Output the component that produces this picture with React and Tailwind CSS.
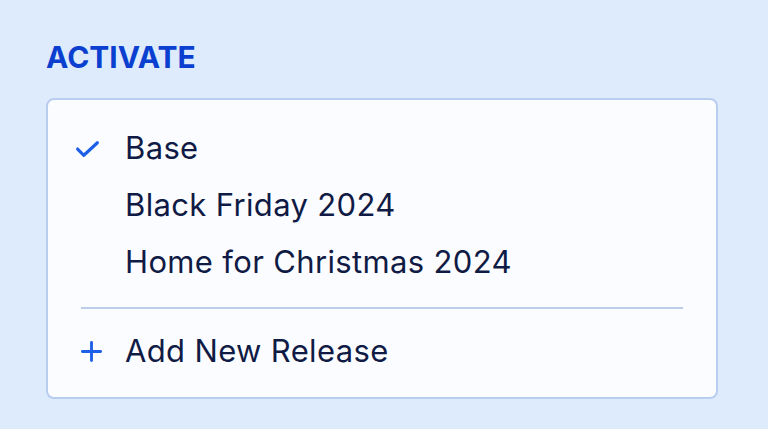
export default function App() {
  const releases = ['Base', 'Black Friday 2024', 'Home for Christmas 2024'];
  const active = 'Base';

  return (
    <div className="min-h-screen w-full bg-[#ddebfc] px-[46px] pt-[38px]" style={{ fontFamily: 'Inter, "Liberation Sans", sans-serif' }}>
      <h2 className="text-[30px] leading-[38px] font-bold text-[#0b3fcf]">ACTIVATE</h2>
      <div className="mt-[22px] w-[672px] rounded-[8px] border-2 border-[#b9cdef] bg-[#fbfcff] pt-[20px] pb-[17px]">
        <ul>
          {releases.map((r) => (
            <li key={r} className="flex h-[57px] items-center">
              <span className="flex w-[77px] justify-end pr-[25px]">
                {r === active && (
                  <svg width="25" height="25" viewBox="0 0 24 24" fill="none" stroke="#1d5fe8" strokeWidth="3" strokeLinecap="round" strokeLinejoin="round">
                    <path d="M2.5 12.5l6 6L21.5 6.5" />
                  </svg>
                )}
              </span>
              <span className="text-[31px] tracking-[0.35px] text-[#101b45]">{r}</span>
            </li>
          ))}
        </ul>
        <div className="mx-[33px] mt-[16px] mb-[14px] h-[2px] bg-[#bccdea]" />
        <button className="flex h-[57px] w-full items-center">
          <span className="flex w-[77px] justify-end pr-[22px]">
            <svg width="23" height="23" viewBox="0 0 24 24" fill="none" stroke="#1d5fe8" strokeWidth="3" strokeLinecap="round">
              <path d="M12 2.5v19M2.5 12h19" />
            </svg>
          </span>
          <span className="text-[31px] tracking-[0.35px] text-[#101b45]">Add New Release</span>
        </button>
      </div>
    </div>
  );
}
